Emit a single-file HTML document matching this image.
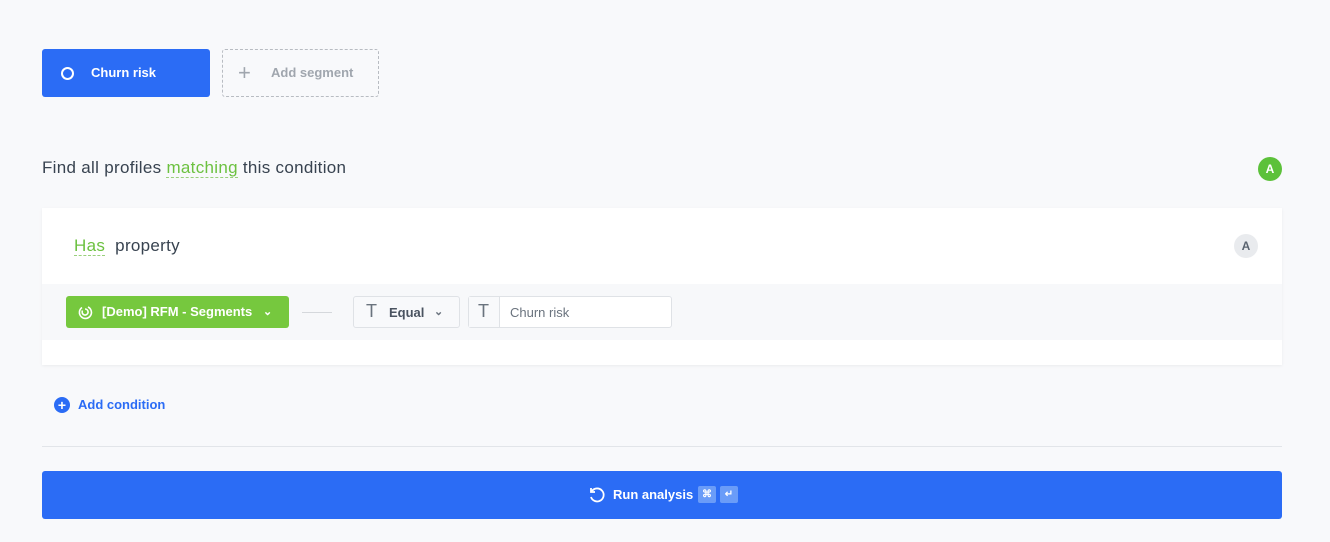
<!DOCTYPE html>
<html><head><style>
*{box-sizing:border-box;margin:0;padding:0}
body{width:1330px;height:542px;background:#f8f9fb;font-family:"Liberation Sans",sans-serif;position:relative;overflow:hidden;color:#384350}
.abs{position:absolute}
</style></head><body>
<div class="abs" style="left:42px;top:49px;width:168px;height:48px;background:#2b6cf5;border-radius:3px;color:#fff;font-size:13px;font-weight:bold">
 <div class="abs" style="left:19px;top:18px;width:13px;height:13px;border:2.5px solid #fff;border-radius:50%"></div>
 <div class="abs" style="left:49px;top:16px">Churn risk</div>
</div>
<div class="abs" style="left:222px;top:49px;width:157px;height:48px;border:1px dashed #b8bcc2;border-radius:3px;color:#a0a6ae;font-size:13px;font-weight:bold">
 <div class="abs" style="left:15px;top:10px;font-size:22px;font-weight:normal">+</div>
 <div class="abs" style="left:48px;top:15px">Add segment</div>
</div>
<div class="abs" style="left:42px;top:158px;font-size:17px;letter-spacing:0.3px">Find all profiles <span style="color:#6cc140;border-bottom:1px dashed #9ad07c">matching</span> this condition</div>
<div class="abs" style="left:1258px;top:157px;width:24px;height:24px;border-radius:50%;background:#5cc13a;color:#fff;font-weight:bold;font-size:12px;text-align:center;line-height:24px">A</div>
<div class="abs" style="left:42px;top:208px;width:1240px;height:157px;background:#fff;box-shadow:0 1px 3px rgba(0,0,0,.06)">
 <div class="abs" style="left:32px;top:28px;font-size:17px;letter-spacing:0.3px"><span style="color:#6cc140;border-bottom:1px dashed #9ad07c">Has</span>&nbsp; property</div>
 <div class="abs" style="left:1192px;top:26px;width:24px;height:24px;border-radius:50%;background:#e9ebee;color:#5a6470;font-weight:bold;font-size:12px;text-align:center;line-height:24px">A</div>
 <div class="abs" style="left:0;top:76px;width:1240px;height:56px;background:#f7f8fa"></div>
 <div class="abs" style="left:24px;top:88px;width:223px;height:32px;background:#76c83e;border-radius:3px;color:#fff;font-size:13px;font-weight:bold">
  <svg class="abs" style="left:11px;top:8px" width="16" height="16" viewBox="0 0 16 16" fill="none" stroke="#fff" stroke-width="1.6"><path d="M5 3.5A6 6 0 1 0 11 3"/><path d="M8 5a3 3 0 1 1-2.5 1.5"/></svg>
  <div class="abs" style="left:36px;top:8px">[Demo] RFM - Segments</div>
  <div class="abs" style="left:197px;top:9px;font-size:11px">&#8964;</div>
 </div>
 <div class="abs" style="left:260px;top:104px;width:30px;height:1px;background:#d5d8dc"></div>
 <div class="abs" style="left:311px;top:88px;width:107px;height:32px;border:1px solid #dfe2e6;border-radius:3px;background:#f8f9fb;font-size:13px;font-weight:bold;color:#4a5360">
  <div class="abs" style="left:12px;top:4px;font-size:18px;font-weight:normal;color:#6a737e">T</div>
  <div class="abs" style="left:35px;top:8px">Equal</div>
  <div class="abs" style="left:80px;top:8px;font-size:11px;color:#6a737e">&#8964;</div>
 </div>
 <div class="abs" style="left:426px;top:88px;width:204px;height:32px;border:1px solid #dfe2e6;border-radius:3px;background:#fff;font-size:13px;color:#6a737e">
  <div class="abs" style="left:0;top:0;width:31px;height:30px;border-right:1px solid #dfe2e6;background:#f8f9fb"></div>
  <div class="abs" style="left:9px;top:4px;font-size:18px">T</div>
  <div class="abs" style="left:41px;top:8px">Churn risk</div>
 </div>
</div>
<div class="abs" style="left:54px;top:397px;width:16px;height:16px;border-radius:50%;background:#2b6cf5;color:#fff;font-size:14px;font-weight:bold;text-align:center;line-height:16px">+</div>
<div class="abs" style="left:78px;top:397px;font-size:13px;font-weight:bold;color:#2b6cf5">Add condition</div>
<div class="abs" style="left:42px;top:446px;width:1240px;height:1px;background:#e2e5e9"></div>
<div class="abs" style="left:42px;top:471px;width:1240px;height:48px;background:#2b6cf5;border-radius:3px;color:#fff;font-size:13px;font-weight:bold">
 <svg class="abs" style="left:546px;top:15px" width="18" height="18" viewBox="0 0 18 18" fill="none" stroke="#fff" stroke-width="1.8"><path d="M4 5A6.5 6.5 0 1 1 3 11"/><path d="M3 2v4h4"/></svg>
 <div class="abs" style="left:571px;top:16px">Run analysis</div>
 <div class="abs" style="left:656px;top:15px;width:18px;height:17px;background:#6a9cf8;border-radius:2px;font-size:10px;text-align:center;line-height:17px">&#8984;</div>
 <div class="abs" style="left:678px;top:15px;width:18px;height:17px;background:#6a9cf8;border-radius:2px;font-size:10px;text-align:center;line-height:17px">&#8629;</div>
</div>
</body></html>
